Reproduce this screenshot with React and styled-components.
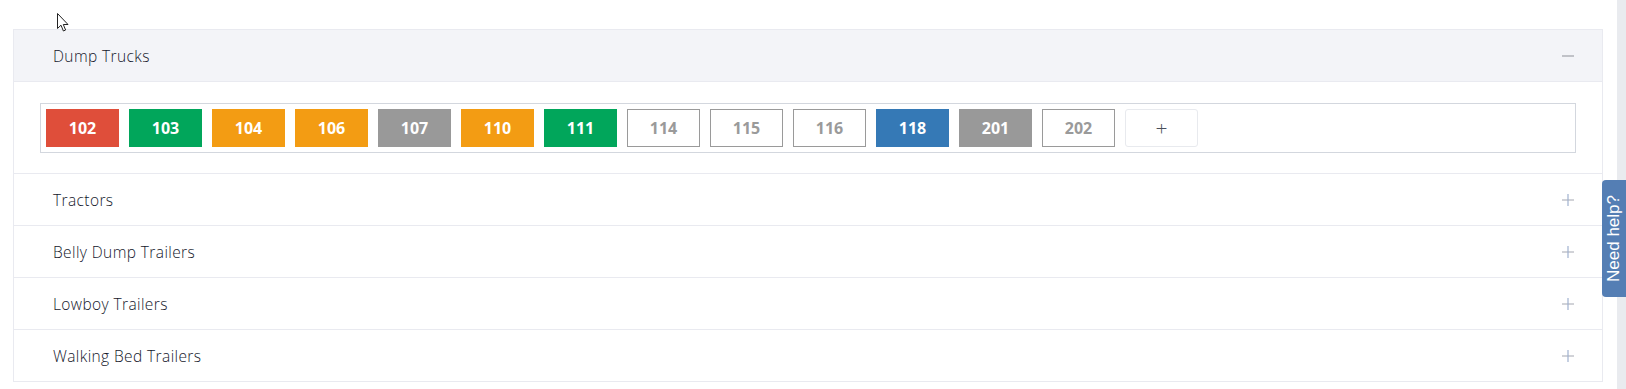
import React from "react";
import styled, { createGlobalStyle } from "styled-components";

const Global = createGlobalStyle`
  html, body { margin: 0; padding: 0; background: #fff; }
  body { font-family: "Open Sans", "Liberation Sans", sans-serif; color: #262b3d; }
  * { box-sizing: border-box; }
`;

const Page = styled.div`
  position: relative;
  display: flex;
  width: 1626px;
  height: 389px;
  overflow: hidden;
`;

const Content = styled.div`
  flex: 1;
  padding: 29px 14px 0 13px;
`;

const ScrollTrack = styled.div`
  width: 9px;
  background: #e9ebef;
`;

const Panel = styled.div`
  border: 1px solid #e9eaf0;
  border-bottom: none;
`;

const Section = styled.div`
  border-bottom: 1px solid #e9eaf0;
`;

const Header = styled.div`
  display: flex;
  align-items: center;
  justify-content: space-between;
  height: 51px;
  padding: 0 28px 0 39px;
  background: ${(p) => (p.$open ? "#f3f4f8" : "#fff")};
  font-size: 15.5px;
  font-weight: 300;
  letter-spacing: 0.4px;
  color: #14172b;
`;

const Body = styled.div`
  border-top: 1px solid #e9eaf0;
  padding: 21px 26px 20px 26px;
`;

const UnitBox = styled.div`
  display: flex;
  gap: 10px;
  padding: 5px;
  border: 1px solid #d3d7de;
`;

const UnitButton = styled.div`
  width: 73px;
  height: 38px;
  display: flex;
  align-items: center;
  justify-content: center;
  font-size: 16px;
  font-weight: 700;
  color: ${(p) => (p.$bg ? "#fff" : "#9a9a9a")};
  background: ${(p) => p.$bg || "#fff"};
  border: 1px solid ${(p) => p.$bg || "#9a9a9a"};
`;

const AddButton = styled.div`
  width: 73px;
  height: 38px;
  display: flex;
  align-items: center;
  justify-content: center;
  border: 1px solid #e8eaee;
  border-radius: 3px;
  color: #4a4f5c;
  font-size: 21px;
  font-weight: 300;
`;

const Toggle = styled.svg`
  width: 12px;
  height: 12px;
  display: block;
`;

const HelpTab = styled.div`
  position: absolute;
  right: 0;
  top: 180px;
  width: 24px;
  height: 117px;
  background: #547eb4;
  border-radius: 4px 0 0 4px;
  display: flex;
  align-items: center;
  justify-content: center;
  color: #fff;
  font-family: "Liberation Sans", Arial, sans-serif;
  font-size: 17px;
  writing-mode: vertical-rl;
  & > span { transform: rotate(180deg); }
`;

const Cursor = styled.svg`
  position: absolute;
  left: 57px;
  top: 13px;
  width: 12px;
  height: 19px;
`;

const units = [
  ["102", "#df4e3a"],
  ["103", "#01a65b"],
  ["104", "#f39c13"],
  ["106", "#f39c13"],
  ["107", "#999999"],
  ["110", "#f39c13"],
  ["111", "#01a65b"],
  ["114", null],
  ["115", null],
  ["116", null],
  ["118", "#3579b6"],
  ["201", "#999999"],
  ["202", null],
];

const sections = ["Tractors", "Belly Dump Trailers", "Lowboy Trailers", "Walking Bed Trailers"];

function Minus() {
  return (
    <Toggle viewBox="0 0 12 12">
      <line x1="0" y1="6" x2="12" y2="6" stroke="#9ea0a8" strokeWidth="1.2" />
    </Toggle>
  );
}

function Plus() {
  return (
    <Toggle viewBox="0 0 12 12">
      <line x1="0" y1="6" x2="12" y2="6" stroke="#a3a6b0" strokeWidth="1" />
      <line x1="6" y1="0" x2="6" y2="12" stroke="#9fb1cf" strokeWidth="1.2" />
    </Toggle>
  );
}

export default function App() {
  return (
    <Page>
      <Global />
      <Content>
        <Panel>
          <Section>
            <Header $open>
              <span>Dump Trucks</span>
              <Minus />
            </Header>
            <Body>
              <UnitBox>
                {units.map(([n, c]) => (
                  <UnitButton key={n} $bg={c}>{n}</UnitButton>
                ))}
                <AddButton>+</AddButton>
              </UnitBox>
            </Body>
          </Section>
          {sections.map((s) => (
            <Section key={s}>
              <Header>
                <span>{s}</span>
                <Plus />
              </Header>
            </Section>
          ))}
        </Panel>
      </Content>
      <ScrollTrack />
      <HelpTab><span>Need help?</span></HelpTab>
      <Cursor viewBox="0 0 12 19">
        <path d="M0.5 0.5 L0.5 15.5 L4 12.2 L6.4 18 L8.6 17 L6.3 11.5 L11 11.5 Z" fill="#fff" stroke="#222" strokeWidth="1" strokeLinejoin="round" />
      </Cursor>
    </Page>
  );
}
